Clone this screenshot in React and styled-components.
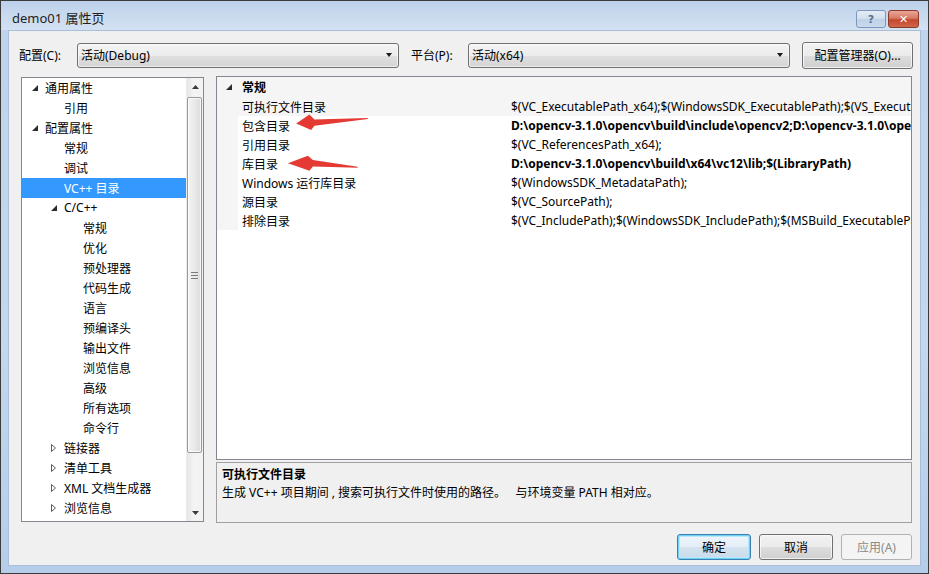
import React from "react";
import styled, { createGlobalStyle, css } from "styled-components";

const UI_FONT = `"Segoe UI", "Noto Sans", "Noto Sans CJK SC", sans-serif`;

const GlobalStyle = createGlobalStyle`
  html, body {
    margin: 0;
    padding: 0;
    background: #ffffff;
  }
  body {
    font-family: ${UI_FONT};
    font-size: 12px;
    color: #000;
  }
  * {
    box-sizing: border-box;
  }
`;

const Window = styled.div`
  width: 929px;
  height: 574px;
  border: 1px solid #3b3b3b;
  background: linear-gradient(180deg, #bfd4ec 0%, #c3d7ee 60%, #b6cde9 100%);
  display: flex;
  flex-direction: column;
  overflow: hidden;
`;

const TitleBar = styled.div`
  height: 29px;
  flex: none;
  display: flex;
  align-items: flex-start;
  justify-content: space-between;
  padding: 9px 9px 0 11px;
  background: linear-gradient(180deg, #bcd1ea 0%, #c8d9ee 45%, #d3e1f2 100%);
`;

const Title = styled.span`
  font-size: 13px;
  line-height: 17px;
  color: #1e1e1e;
`;

const CaptionButtons = styled.div`
  display: flex;
  gap: 2px;
`;

const CaptionButton = styled.div`
  width: ${(p) => p.$w}px;
  height: 18px;
  border-radius: 3px;
  display: flex;
  align-items: center;
  justify-content: center;
  font-family: "DejaVu Sans", sans-serif;
  font-weight: bold;
  font-size: 11px;
  ${(p) =>
    p.$kind === "close"
      ? css`
          border: 1px solid #8a3b2c;
          background: linear-gradient(180deg, #e8a795 0%, #d77a64 45%, #c6462f 55%, #d0664c 100%);
          color: #ffffff;
        `
      : css`
          border: 1px solid #7f97b6;
          background: linear-gradient(180deg, #e4edf7 0%, #d3e0ef 45%, #bfd1e7 55%, #c9daee 100%);
          color: #5a6f8c;
        `}
`;

const Client = styled.div`
  flex: 1;
  margin: 0 7px 7px 7px;
  background: #f0f0f0;
  border: 1px solid #a9bfd9;
  padding: 11px 8px 0 12px;
  display: flex;
  flex-direction: column;
`;

const ConfigRow = styled.div`
  display: flex;
  align-items: center;
  height: 26px;
  margin-left: -2px;
`;

const FieldLabel = styled.span`
  width: ${(p) => p.$w}px;
  flex: none;
  margin-left: ${(p) => p.$gap || 0}px;
`;

const Combo = styled.div`
  width: ${(p) => p.$w}px;
  height: 25px;
  flex: none;
  border: 1px solid #707070;
  border-radius: 3px;
  background: linear-gradient(180deg, #f4f4f4 0%, #ececec 50%, #e0e0e0 51%, #d4d4d4 100%);
  box-shadow: inset 0 0 0 1px rgba(255, 255, 255, 0.6);
  display: flex;
  align-items: center;
  justify-content: space-between;
  padding: 0 6px 0 3px;
`;

const DownGlyph = styled.span`
  width: 0;
  height: 0;
  border-left: 3px solid transparent;
  border-right: 3px solid transparent;
  border-top: 4px solid #1a1a1a;
`;

const PushButton = styled.div`
  width: ${(p) => p.$w}px;
  height: ${(p) => p.$h || 26}px;
  flex: none;
  margin-left: ${(p) => p.$gap || 0}px;
  border: 1px solid #707070;
  border-radius: 3px;
  background: linear-gradient(180deg, #f2f2f2 0%, #ebebeb 50%, #dddddd 51%, #cfcfcf 100%);
  box-shadow: inset 0 0 0 1px rgba(255, 255, 255, 0.7);
  display: flex;
  align-items: center;
  justify-content: center;
  color: #000;
  ${(p) =>
    p.$variant === "default" &&
    css`
      border-color: #3c7fb1;
      background: linear-gradient(180deg, #eef6fb 0%, #e4eef6 50%, #d4e3ef 51%, #c9dbea 100%);
      box-shadow: inset 0 0 0 1px #6fd0f6, inset 0 0 0 2px #b8e8fb;
    `}
  ${(p) =>
    p.$variant === "disabled" &&
    css`
      border-color: #adb2b5;
      background: #f4f4f4;
      box-shadow: none;
      color: #8a8a8a;
    `}
`;

const Main = styled.div`
  display: flex;
  gap: 12px;
  height: 447px;
  margin-top: 8px;
`;

const TreePanel = styled.div`
  width: 183px;
  height: 445px;
  margin-top: 1px;
  border: 1px solid #828790;
  background: #ffffff;
  display: flex;
`;

const TreeList = styled.div`
  flex: 1;
  overflow: hidden;
`;

const TreeRow = styled.div`
  height: 20px;
  display: flex;
  align-items: center;
  padding-left: ${(p) => 9 + p.$level * 19}px;
  padding-bottom: 1px;
  white-space: nowrap;
  background: ${(p) => (p.$selected ? "#3399ff" : "transparent")};
  color: ${(p) => (p.$selected ? "#ffffff" : "#000000")};
`;

const ExpanderSlot = styled.span`
  width: 14px;
  flex: none;
  display: flex;
  align-items: center;
`;

const ScrollBar = styled.div`
  width: 17px;
  flex: none;
  display: flex;
  flex-direction: column;
  background: linear-gradient(90deg, #e6e6e6 0%, #f3f3f3 40%, #f3f3f3 100%);
  border-left: 1px solid #ececec;
`;

const ScrollArrow = styled.div`
  height: 17px;
  flex: none;
  display: flex;
  align-items: center;
  justify-content: center;
`;

const ScrollTrack = styled.div`
  flex: 1;
  padding: 2px 1px 0 0;
`;

const ScrollThumb = styled.div`
  height: 356px;
  border: 1px solid #9a9a9a;
  border-radius: 2px;
  background: linear-gradient(90deg, #f4f4f4 0%, #e9e9e9 50%, #dcdcdc 100%);
  box-shadow: inset 0 0 0 1px rgba(255, 255, 255, 0.7);
  display: flex;
  align-items: center;
  justify-content: center;
`;

const Grip = styled.div`
  width: 7px;
  height: 7px;
  border-top: 1px solid #7a7a7a;
  border-bottom: 1px solid #7a7a7a;
  position: relative;
  &::after {
    content: "";
    position: absolute;
    left: 0;
    right: 0;
    top: 2px;
    border-top: 1px solid #7a7a7a;
  }
`;

const RightCol = styled.div`
  width: 696px;
  display: flex;
  flex-direction: column;
`;

const PropGrid = styled.div`
  height: 386px;
  border: 1px solid #828790;
  background: #ffffff;
  position: relative;
  overflow: hidden;
`;

const GridRow = styled.div`
  height: ${(p) => (p.$category ? 20 : 19)}px;
  display: flex;
  align-items: center;
  white-space: nowrap;
  background: ${(p) => (p.$category || p.$selected ? "#f5f5f5" : "#ffffff")};
`;

const Gutter = styled.div`
  width: 21px;
  height: 100%;
  flex: none;
  display: flex;
  align-items: center;
  padding-left: 8px;
  background: #f5f5f5;
`;

const NameCell = styled.div`
  width: 269px;
  flex: none;
  padding-left: 4px;
  overflow: hidden;
  font-weight: ${(p) => (p.$bold ? "bold" : "normal")};
`;

const ValueCell = styled.div`
  flex: 1;
  min-width: 0;
  padding-left: 4px;
  overflow: hidden;
  font-weight: ${(p) => (p.$bold ? "bold" : "normal")};
`;

const Overlay = styled.svg`
  position: absolute;
  left: 0;
  top: 0;
  width: 100%;
  height: 100%;
  pointer-events: none;
`;

const DescPanel = styled.div`
  margin-top: 2px;
  height: 61px;
  border: 1px solid #a0a0a0;
  background: #f0f0f0;
  padding: 3px 5px;
  line-height: 18px;
`;

const DescTitle = styled.div`
  font-weight: bold;
`;

const DescText = styled.div`
  white-space: pre;
`;

const ButtonRow = styled.div`
  display: flex;
  justify-content: flex-end;
  margin-top: 11px;
`;

const Expanded = () => (
  <svg width="8" height="8" viewBox="0 0 8 8">
    <polygon points="7,1 7,7 1,7" fill="#2b2b2b" />
  </svg>
);

const Collapsed = () => (
  <svg width="8" height="10" viewBox="0 0 8 10">
    <polygon points="1.5,1.5 5.5,5 1.5,8.5" fill="#ffffff" stroke="#5c5c5c" strokeWidth="1" />
  </svg>
);

const treeItems = [
  { level: 0, text: "通用属性", exp: "open" },
  { level: 1, text: "引用" },
  { level: 0, text: "配置属性", exp: "open" },
  { level: 1, text: "常规" },
  { level: 1, text: "调试" },
  { level: 1, text: "VC++ 目录", selected: true },
  { level: 1, text: "C/C++", exp: "open" },
  { level: 2, text: "常规" },
  { level: 2, text: "优化" },
  { level: 2, text: "预处理器" },
  { level: 2, text: "代码生成" },
  { level: 2, text: "语言" },
  { level: 2, text: "预编译头" },
  { level: 2, text: "输出文件" },
  { level: 2, text: "浏览信息" },
  { level: 2, text: "高级" },
  { level: 2, text: "所有选项" },
  { level: 2, text: "命令行" },
  { level: 1, text: "链接器", exp: "closed" },
  { level: 1, text: "清单工具", exp: "closed" },
  { level: 1, text: "XML 文档生成器", exp: "closed" },
  { level: 1, text: "浏览信息", exp: "closed" },
];

const props = [
  {
    name: "可执行文件目录",
    value: "$(VC_ExecutablePath_x64);$(WindowsSDK_ExecutablePath);$(VS_ExecutablePath);$(MSBuild_ExecutablePath);",
    selected: true,
  },
  {
    name: "包含目录",
    value: "D:\\opencv-3.1.0\\opencv\\build\\include\\opencv2;D:\\opencv-3.1.0\\opencv\\build\\include;$(IncludePath)",
    bold: true,
  },
  { name: "引用目录", value: "$(VC_ReferencesPath_x64);" },
  {
    name: "库目录",
    value: "D:\\opencv-3.1.0\\opencv\\build\\x64\\vc12\\lib;$(LibraryPath)",
    bold: true,
  },
  { name: "Windows 运行库目录", value: "$(WindowsSDK_MetadataPath);" },
  { name: "源目录", value: "$(VC_SourcePath);" },
  {
    name: "排除目录",
    value: "$(VC_IncludePath);$(WindowsSDK_IncludePath);$(MSBuild_ExecutablePath);$(VC_LibraryPath_x64);",
  },
];

const App = () => {
  const renderTree = () => {
    return treeItems.map((item, i) => (
      <TreeRow key={i} $level={item.level} $selected={item.selected}>
        <ExpanderSlot>
          {item.exp === "open" && <Expanded />}
          {item.exp === "closed" && <Collapsed />}
        </ExpanderSlot>
        {item.text}
      </TreeRow>
    ));
  };

  const renderGrid = () => {
    return (
      <PropGrid>
        <GridRow $category>
          <Gutter>
            <Expanded />
          </Gutter>
          <NameCell $bold>常规</NameCell>
        </GridRow>
        {props.map((p, i) => (
          <GridRow key={i} $selected={p.selected}>
            <Gutter />
            <NameCell>{p.name}</NameCell>
            <ValueCell $bold={p.bold}>{p.value}</ValueCell>
          </GridRow>
        ))}
        <Overlay viewBox="0 0 694 384">
          <polygon
            points="78,46.7 91.3,37.7 96.3,42.7 149.7,41.2 150,42.2 96.3,49 93,53.3"
            fill="#e53a33"
          />
          <polygon
            points="69.7,86.7 89.7,79 94.7,83.3 139.7,90.2 139.7,91.2 94.7,90 91.3,94.3"
            fill="#e53a33"
          />
        </Overlay>
      </PropGrid>
    );
  };

  return (
    <>
      <GlobalStyle />
      <Window>
        <TitleBar>
          <Title>demo01 属性页</Title>
          <CaptionButtons>
            <CaptionButton $w={30}>?</CaptionButton>
            <CaptionButton $w={31} $kind="close">✕</CaptionButton>
          </CaptionButtons>
        </TitleBar>
        <Client>
          <ConfigRow>
            <FieldLabel $w={58}>配置(C):</FieldLabel>
            <Combo $w={322}>
              活动(Debug)
              <DownGlyph />
            </Combo>
            <FieldLabel $w={57} $gap={12}>平台(P):</FieldLabel>
            <Combo $w={322}>
              活动(x64)
              <DownGlyph />
            </Combo>
            <PushButton $w={111} $h={27} $gap={12}>配置管理器(O)...</PushButton>
          </ConfigRow>
          <Main>
            <TreePanel>
              <TreeList>{renderTree()}</TreeList>
              <ScrollBar>
                <ScrollArrow>
                  <svg width="7" height="4" viewBox="0 0 7 4">
                    <polygon points="0,4 3.5,0 7,4" fill="#3a3a3a" />
                  </svg>
                </ScrollArrow>
                <ScrollTrack>
                  <ScrollThumb>
                    <Grip />
                  </ScrollThumb>
                </ScrollTrack>
                <ScrollArrow>
                  <svg width="7" height="4" viewBox="0 0 7 4">
                    <polygon points="0,0 7,0 3.5,4" fill="#3a3a3a" />
                  </svg>
                </ScrollArrow>
              </ScrollBar>
            </TreePanel>
            <RightCol>
              {renderGrid()}
              <DescPanel>
                <DescTitle>可执行文件目录</DescTitle>
                <DescText>生成 VC++ 项目期间 , 搜索可执行文件时使用的路径。   与环境变量 PATH 相对应。</DescText>
              </DescPanel>
            </RightCol>
          </Main>
          <ButtonRow>
            <PushButton $w={74} $variant="default">确定</PushButton>
            <PushButton $w={74} $gap={8}>取消</PushButton>
            <PushButton $w={71} $gap={8} $variant="disabled">应用(A)</PushButton>
          </ButtonRow>
        </Client>
      </Window>
    </>
  );
};

export default App;
